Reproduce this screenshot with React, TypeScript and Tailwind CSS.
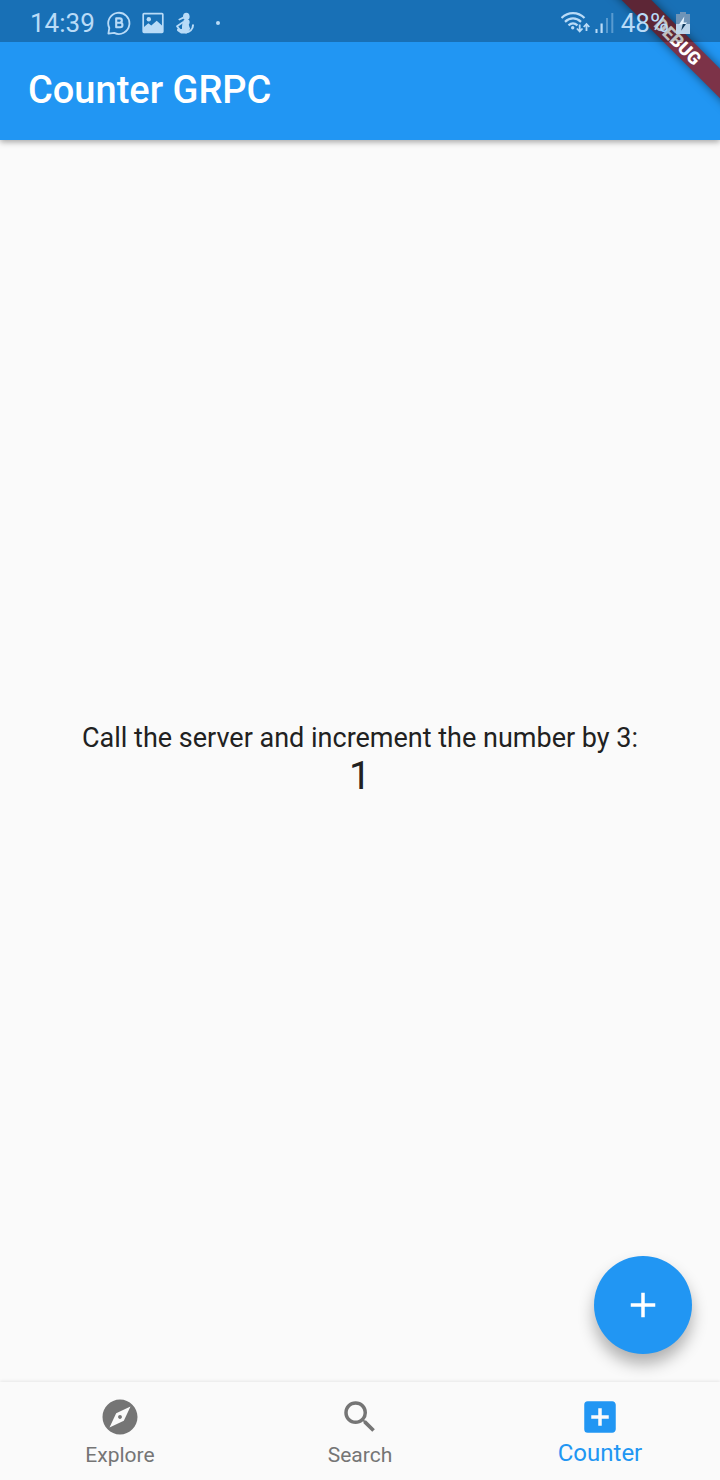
import { useState } from "react";
import type { ReactNode } from "react";
import { MdAdd, MdAddBox, MdExplore, MdSearch } from "react-icons/md";

function ChatBadgeIcon() {
  return (
    <svg viewBox="0 0 24 24" className="size-6" fill="none" stroke="currentColor" aria-hidden="true">
      <path d="M1.4 22.6 2.3 17A10.6 10.6 0 1 1 7.2 21.9Z" strokeWidth="1.8" strokeLinejoin="round" />
      <path
        d="M9.2 7.4h3.5a2.1 2.1 0 0 1 0 4.3H9.2Zm0 4.3h4a2.2 2.2 0 0 1 0 4.5H9.2Z"
        strokeWidth="2.1"
        strokeLinejoin="round"
      />
    </svg>
  );
}

function PictureIcon() {
  return (
    <svg viewBox="0 0 22 22" className="size-[22px]" fill="none" aria-hidden="true">
      <rect x="1.2" y="1.7" width="19.6" height="18.6" rx="0.8" stroke="currentColor" strokeWidth="1.7" />
      <circle cx="6.8" cy="7.2" r="2.2" fill="currentColor" />
      <path d="M2 15 6.3 11.2 9.3 13.5 14.7 8.8 20 13.5V20H2Z" fill="currentColor" />
    </svg>
  );
}

function FigureIcon() {
  return (
    <svg viewBox="0 0 20 22" className="h-[22px] w-5" fill="currentColor" aria-hidden="true">
      <ellipse cx="11.3" cy="4.6" rx="3.3" ry="3.8" />
      <path d="M3.2 7.2 8.4 4.6 8.8 6.5 4.2 8.5Z" />
      <path d="M8.8 8h5.2c.9 1.4.9 3-.2 4.6.2 1.5.6 2.6 1.4 4.2L12 21.4H6L2.4 19c-.8-1-.4-2 .6-2.2l4 .2c-.1-3.5.3-6.7 1.8-9Z" />
      <path
        d="M8.3 10.1 2 14.2 4.6 17.6"
        fill="none"
        stroke="currentColor"
        strokeWidth="1.8"
        strokeLinejoin="round"
      />
      <path
        d="M10.5 20.3c4.2.1 7.5-2.9 7.5-7"
        fill="none"
        stroke="currentColor"
        strokeWidth="2"
        strokeLinecap="round"
      />
    </svg>
  );
}

function WifiIcon() {
  return (
    <svg viewBox="0 0 30 24" className="h-6 w-[30px]" fill="none" stroke="currentColor" aria-hidden="true">
      <path d="M0.5 7C7 .4 17 .4 23.5 7" strokeWidth="2.2" />
      <path d="M4 10.9c4.8-4.6 11.2-4.6 16 0" strokeWidth="2.2" />
      <path d="M7.5 14.4c2.8-2.5 6.2-2.5 9 0" strokeWidth="2.2" />
      <circle cx="11.7" cy="16.8" r="1.7" fill="currentColor" stroke="none" />
      <path d="M18.7 13.5v7m-2.8-3 2.8 3 2.8-3" strokeWidth="1.8" />
      <path d="M25.5 20v-7m-2.8 3 2.8-3 2.8 3" strokeWidth="1.8" />
    </svg>
  );
}

function SignalIcon() {
  return (
    <svg viewBox="0 0 19 20" className="h-5 w-[19px]" fill="currentColor" aria-hidden="true">
      <rect x="0.5" y="16" width="2" height="4" />
      <rect x="5.5" y="10.5" width="2.2" height="9.5" />
      <rect x="11" y="5" width="2" height="15" opacity="0.4" />
      <rect x="16.3" y="0" width="2" height="20" opacity="0.4" />
    </svg>
  );
}

function BatteryIcon() {
  return (
    <svg viewBox="0 0 14 22" className="h-[22px] w-3.5" aria-hidden="true">
      <path d="M4 0h6v2h4v10H0V2h4Z" fill="#6f94b7" />
      <path d="M0 12h14v10H0Z" fill="#bcd4ea" />
      <path d="m8.3 4.5-5.3 8h3.6L5.2 18.8 11 10.4H7.6Z" fill="#e3f1fd" />
      <path d="M6.7 12h3.3L5.2 18.8Z" fill="#11395c" />
    </svg>
  );
}

function StatusBar() {
  return (
    <div className="relative z-20 flex h-[42px] items-center justify-between bg-black/25 px-[30px] pt-1 text-[26px] leading-[38px] text-[#b9dbf7]">
      <div className="flex items-center gap-3">
        <time>14:39</time>
        <div className="flex items-center gap-[11px]">
          <ChatBadgeIcon />
          <PictureIcon />
          <FigureIcon />
          <span className="ml-2.5 size-1 rounded-full bg-current" />
        </div>
      </div>
      <div className="flex items-center gap-[7px]">
        <div className="flex items-center gap-1">
          <WifiIcon />
          <SignalIcon />
        </div>
        <span>48%</span>
        <BatteryIcon />
      </div>
    </div>
  );
}

function DebugBanner() {
  return (
    <div className="pointer-events-none absolute top-0 right-0 z-10 size-[140px] overflow-hidden">
      <div className="absolute top-[31px] left-0 flex h-[21px] w-[196px] rotate-45 items-center justify-center bg-[#7c3348] text-[18px] font-black text-white shadow-[0_0_10px_rgba(0,0,0,0.5)]">
        DEBUG
      </div>
    </div>
  );
}

type NavItemProps = {
  label: string;
  icon: ReactNode;
  active: boolean;
  onSelect: () => void;
};

function NavItem({ label, icon, active, onSelect }: NavItemProps) {
  return (
    <button
      type="button"
      onClick={onSelect}
      aria-current={active ? "page" : undefined}
      className={
        active
          ? "flex h-full flex-1 flex-col items-center pt-[14px] text-[24px] leading-[30px] text-[#2196f3]"
          : "flex h-full flex-1 flex-col items-center pt-[14px] text-[21px] leading-[34px] text-[#757575]"
      }
    >
      {icon}
      {label}
    </button>
  );
}

const tabs = [
  { label: "Explore", icon: <MdExplore className="size-[42px]" /> },
  { label: "Search", icon: <MdSearch className="size-[42px]" /> },
  { label: "Counter", icon: <MdAddBox className="size-[42px]" /> },
];

export default function App() {
  const [tab, setTab] = useState("Counter");
  const [count, setCount] = useState(1);

  return (
    <div className="flex min-h-screen flex-col bg-[#fafafa] font-['Roboto',sans-serif] text-[#212121]">
      <header className="relative z-10 bg-[#2196f3] shadow-[0_2px_6px_rgba(0,0,0,0.35)]">
        <StatusBar />
        <div className="flex h-[98px] items-center px-7 pb-[2px]">
          <h1 className="text-[38px] leading-[48px] font-medium text-white">Counter GRPC</h1>
        </div>
        <DebugBanner />
      </header>

      <main className="relative flex flex-1 flex-col items-center justify-center pb-[2px] text-center">
        <p className="text-[27px] leading-8">Call the server and increment the number by 3:</p>
        <output className="text-[39px] leading-[45px]">{count}</output>
        <button
          type="button"
          aria-label="Increment"
          onClick={() => setCount(count + 3)}
          className="absolute right-7 bottom-7 flex size-[98px] items-center justify-center rounded-full bg-[#2196f3] text-white shadow-[0_10px_16px_rgba(0,0,0,0.3)]"
        >
          <MdAdd className="size-[42px]" />
        </button>
      </main>

      <nav className="flex h-[98px] bg-[#fafafa] shadow-[0_-1px_3px_rgba(0,0,0,0.08)]">
        {tabs.map(({ label, icon }) => (
          <NavItem key={label} label={label} icon={icon} active={tab === label} onSelect={() => setTab(label)} />
        ))}
      </nav>
    </div>
  );
}
